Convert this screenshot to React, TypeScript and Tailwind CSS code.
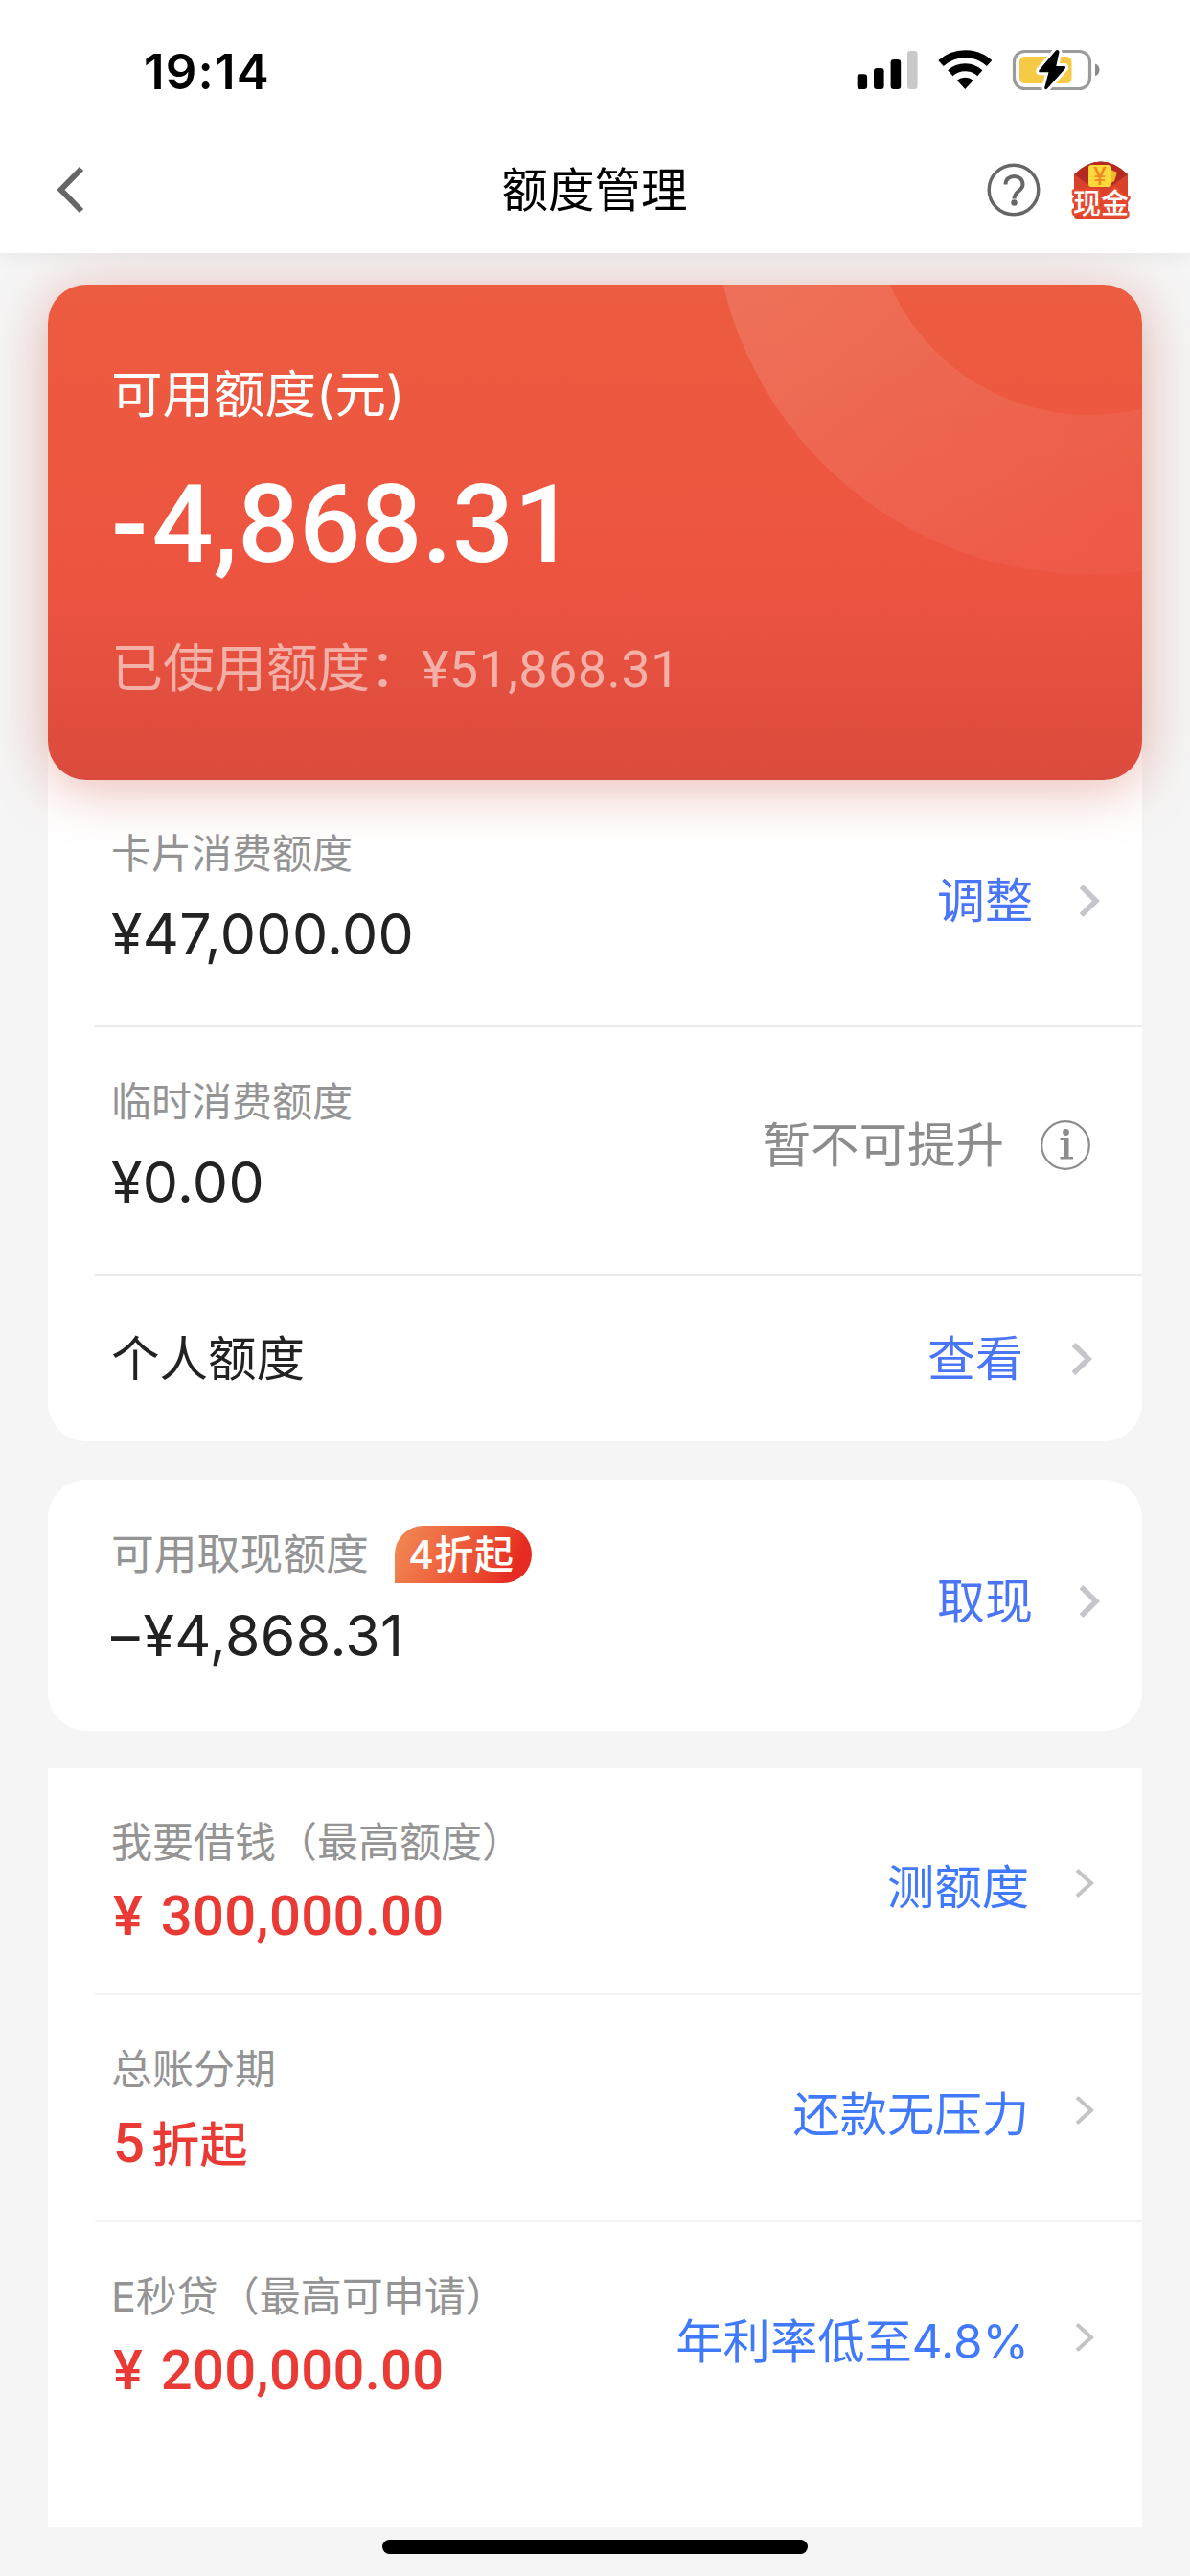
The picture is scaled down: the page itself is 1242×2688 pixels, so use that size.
import type { ReactNode } from "react";

function StatusBar() {
  return (
    <div className="flex h-[132px] items-start justify-between pl-[150px] pr-[94px] pt-[50px]">
      <span className="text-[51px] font-semibold leading-[50px] tracking-[1.200px] text-black">19:14</span>
      <svg width="254" height="50" viewBox="0 0 254 50" className="mt-[-2px]">
        {/* signal */}
        <rect x="0.7" y="29.3" width="10.4" height="15.7" rx="3.2" />
        <rect x="18" y="23" width="10.6" height="22" rx="3.2" />
        <rect x="35.6" y="14" width="10.6" height="31" rx="3.2" />
        <rect x="53" y="5" width="10.6" height="40" rx="3.2" fill="#c9c9c9" />
        {/* wifi */}
        <g fill="none" stroke="#000" strokeWidth="8">
          <path d="M88 18a37.5 37.5 0 0 1 50.6 0" />
          <path d="M97.8 28.2a23.4 23.4 0 0 1 31 0" />
        </g>
        <path d="M104.8 35.8a13.5 13.5 0 0 1 17 0l-8.5 9.2z" />
        {/* battery */}
        <rect x="164.5" y="5.5" width="79" height="39" rx="11" fill="none" stroke="#9b9b9b" strokeWidth="3.2" />
        <path d="M249 18.5c6 1.5 6 11 0 12.6z" fill="#8a8a8a" />
        <rect x="170" y="11" width="54.5" height="28" rx="5.5" fill="#f7ca45" />
        <path
          d="M208 4.600L190.600 25q-1.200 2.300 1 2.300H200.500L196.200 43.500q.3 2.700 2.500 1.200L217.800 23.400q1.200-2.300-1-2.300H208.300L211.500 6q-.8-3-3.500-1.400z"
          stroke="#fff"
          strokeWidth="6"
          strokeLinejoin="round"
          paintOrder="stroke"
        />
      </svg>
    </div>
  );
}

function CashIcon() {
  return (
    <svg width="62" height="62" viewBox="0 0 62 62">
      <path d="M3 15Q31-12 59 15V58q0 3-3 3H6q-3 0-3-3z" fill="#d8422a" />
      <path d="M3 15Q31-12 59 15L42 27H20z" fill="#b52a20" />
      <path d="M37 8l11 5-3 9-8 5z" fill="#eeb92c" />
      <rect x="18" y="5" width="24" height="23" rx="3" fill="#fbd93a" />
      <text x="30" y="25.500" textAnchor="middle" fontSize="25" fontWeight="500" fill="#ec8a24">¥</text>
      <text
        x="31"
        y="55.500"
        textAnchor="middle"
        fontSize="29"
        fontWeight="500"
        fill="#fff"
        stroke="#e5492f"
        strokeWidth="5"
        strokeLinejoin="round"
        paintOrder="stroke"
      >
        现金
      </text>
    </svg>
  );
}

function NavBar() {
  return (
    <div className="grid h-[132px] grid-cols-[1fr_auto_1fr] items-center pl-[58px] pr-[62px]">
      <svg width="32" height="52" viewBox="0 0 32 52" fill="none" stroke="#666" strokeWidth="6">
        <path d="M27 4L5.500 26L27 48" />
      </svg>
      <h1 className="ml-[3px] pt-px text-[48.500px] font-normal leading-[56px] text-black">额度管理</h1>
      <div className="flex items-center justify-end gap-[32px]">
        <svg width="56" height="56" viewBox="0 0 56 56" fill="none" stroke="#666">
          <circle cx="28" cy="28" r="25.8" strokeWidth="3.400" />
          <path d="M19.500 22.500c0-11.500 18-11.500 18 0 0 6.500-9 7-9 15" strokeWidth="4" />
          <circle cx="28.500" cy="41.500" r="3.200" fill="#666" stroke="none" />
        </svg>
        <CashIcon />
      </div>
    </div>
  );
}

function Chevron({ thin = false }: { thin?: boolean }) {
  return thin ? (
    <svg width="20" height="32" viewBox="0 0 20 32" fill="none" stroke="#c4c4c7" strokeWidth="4">
      <path d="M2 2.500L17 16L2 29.500" />
    </svg>
  ) : (
    <svg width="22" height="36" viewBox="0 0 22 36" fill="none" stroke="#c5c5cb" strokeWidth="5.600">
      <path d="M2.500 3L18 18L2.500 33" />
    </svg>
  );
}

function InfoIcon() {
  return (
    <svg width="52" height="52" viewBox="0 0 52 52" fill="none">
      <circle cx="26" cy="26" r="24.800" stroke="#8c8c8c" strokeWidth="2.200" />
      <circle cx="26.500" cy="12.500" r="3.400" fill="#8c8c8c" />
      <path d="M20.500 18.500H29.500V38H34V40.500H20.500V38H25V21H20.500z" fill="#8c8c8c" />
    </svg>
  );
}

function QuotaCard() {
  return (
    <div className="relative z-10 h-[517px] rounded-[40px] bg-linear-to-b from-[#ec5c40] via-[#ed5440] via-60% to-[#db4b3d] pl-[66px] shadow-[0_8px_58px_rgba(200,75,55,0.4)]">
      <svg className="absolute right-0 top-0 rounded-tr-[40px]" width="440" height="310" viewBox="752 297 440 310">
        <defs>
          <linearGradient id="ring" gradientUnits="userSpaceOnUse" x1="800" y1="300" x2="1120" y2="610">
            <stop offset="0" stopColor="#fff" stopOpacity="0.125" />
            <stop offset="1" stopColor="#fff" stopOpacity="0.03" />
          </linearGradient>
        </defs>
        <circle cx="1137" cy="206" r="310" fill="none" stroke="url(#ring)" strokeWidth="166" />
      </svg>
      <p className="pt-[85px] text-[53.500px] leading-[60px] text-white">可用额度(元)</p>
      <p className="mt-[51px] font-[Roboto] text-[113px] font-medium leading-[110px] text-white">
        <span className="tracking-[4px]">-</span>4,868.31
      </p>
      <p className="mt-[63px] text-[54px] leading-[64px] text-white/55">
        已使用额度：<span className="font-[Roboto] tracking-[0.400px]">¥51,868.31</span>
      </p>
    </div>
  );
}

type RowProps = {
  label: ReactNode;
  value: ReactNode;
  action: ReactNode;
  last?: boolean;
};

function LimitRow({ label, value, action, last }: RowProps) {
  return (
    <div className="relative flex h-[259px] justify-between pl-[66px]">
      <div className="pt-[54px]">
        <div className="text-[42px] leading-[48px] text-[#949494]">{label}</div>
        <div className="mt-[30px] text-[59px] leading-[60px] tracking-[0.400px] text-[#222]">{value}</div>
      </div>
      {action}
      {!last && <div className="absolute bottom-0 left-[49px] right-0 h-[2px] bg-[#ebebeb]" />}
    </div>
  );
}

const loans = [
  { label: "我要借钱（最高额度）", value: "¥ 300,000.00", action: "测额度" },
  {
    label: "总账分期",
    value: (
      <>
        5<span className="ml-[7px] text-[50px]">折起</span>
      </>
    ),
    action: "还款无压力",
  },
  { label: "E秒贷（最高可申请）", value: "¥ 200,000.00", action: "年利率低至4.8%" },
];

export default function App() {
  return (
    <div
      lang="zh-CN"
      className="flex h-[2688px] w-[1242px] flex-col overflow-hidden bg-[#f5f5f5] font-[Inter,'Noto_Sans_CJK_SC',sans-serif]"
    >
      <header className="relative z-20 h-[264px] shrink-0 bg-white shadow-[0_0_20px_rgba(0,0,0,0.08)]">
        <StatusBar />
        <NavBar />
      </header>

      <main className="flex flex-col px-[50px] pt-[33px]">
        <QuotaCard />

        {/* Spending limits */}
        <section className="-mt-[28px] rounded-b-[40px] bg-white pt-[27px]">
          <LimitRow
            label="卡片消费额度"
            value="¥47,000.00"
            action={
              <div className="flex h-[253px] items-center gap-[48px] pr-[44px]">
                <span className="text-[50px] leading-[56px] text-[#4a75f6]">调整</span>
                <Chevron />
              </div>
            }
          />
          <LimitRow
            label="临时消费额度"
            value="¥0.00"
            action={
              <div className="flex h-[246px] items-center gap-[38px] pr-[54px]">
                <span className="text-[50.500px] leading-[56px] text-[#8c8c8c]">暂不可提升</span>
                <InfoIcon />
              </div>
            }
          />
          <div className="flex h-[173px] items-center pl-[66px] pr-[52px] pt-px">
            <span className="flex-1 text-[50.500px] leading-[56px] text-[#222]">个人额度</span>
            <span className="mr-[50px] text-[50px] leading-[56px] text-[#4a75f6]">查看</span>
            <Chevron />
          </div>
        </section>

        {/* Cash withdrawal */}
        <section className="mt-[40px] h-[262px] rounded-[40px] bg-white">
          <LimitRow
            last
            label={
              <span className="flex items-center gap-[27px] text-[44.800px]">
                可用取现额度
                <span className="my-[-6px] flex h-[60px] w-[143px] items-center justify-center rounded-[30px] rounded-bl-none bg-linear-115 from-[#f28a55] to-[#e62b22] to-85% pr-[4px] text-[41px] font-medium tracking-[0.600px] text-white">
                  4折起
                </span>
              </span>
            }
            value={
              <span className="relative top-px">
                <span className="tracking-[4px]">–</span>¥4,868.31
              </span>
            }
            action={
              <div className="flex h-[254px] items-center gap-[48px] pr-[44px]">
                <span className="text-[50px] leading-[56px] text-[#4a75f6]">取现</span>
                <Chevron />
              </div>
            }
          />
        </section>

        {/* Loan offers */}
        <section className="mt-[39px] h-[792px] bg-white">
          {loans.map((l, i) => (
            <div key={l.label} className="relative flex h-[237px] justify-between pl-[66px] pr-[50px]">
              <div className="pt-[53px]">
                <p className="text-[43px] leading-[48px] text-[#949494]">{l.label}</p>
                <p className="ml-[2px] mt-[23px] font-[Roboto,'Noto_Sans_CJK_SC',sans-serif] text-[58px] font-medium leading-[60px] tracking-[0.300px] text-[#e93a36] [word-spacing:4px]">
                  {l.value}
                </p>
              </div>
              <div className="flex h-[247px] items-center gap-[48px]">
                <span className="text-[49.300px] leading-[56px] text-[#4079fb]">{l.action}</span>
                <span className="mb-[7px]">
                  <Chevron thin />
                </span>
              </div>
              {i < 2 && <div className="absolute bottom-0 left-[49px] right-0 h-[2px] bg-[#f2f2f2]" />}
            </div>
          ))}
        </section>
      </main>

      {/* Home indicator */}
      <div className="mx-auto mt-[13px] h-[15px] w-[444px] shrink-0 rounded-full bg-black" />
    </div>
  );
}
